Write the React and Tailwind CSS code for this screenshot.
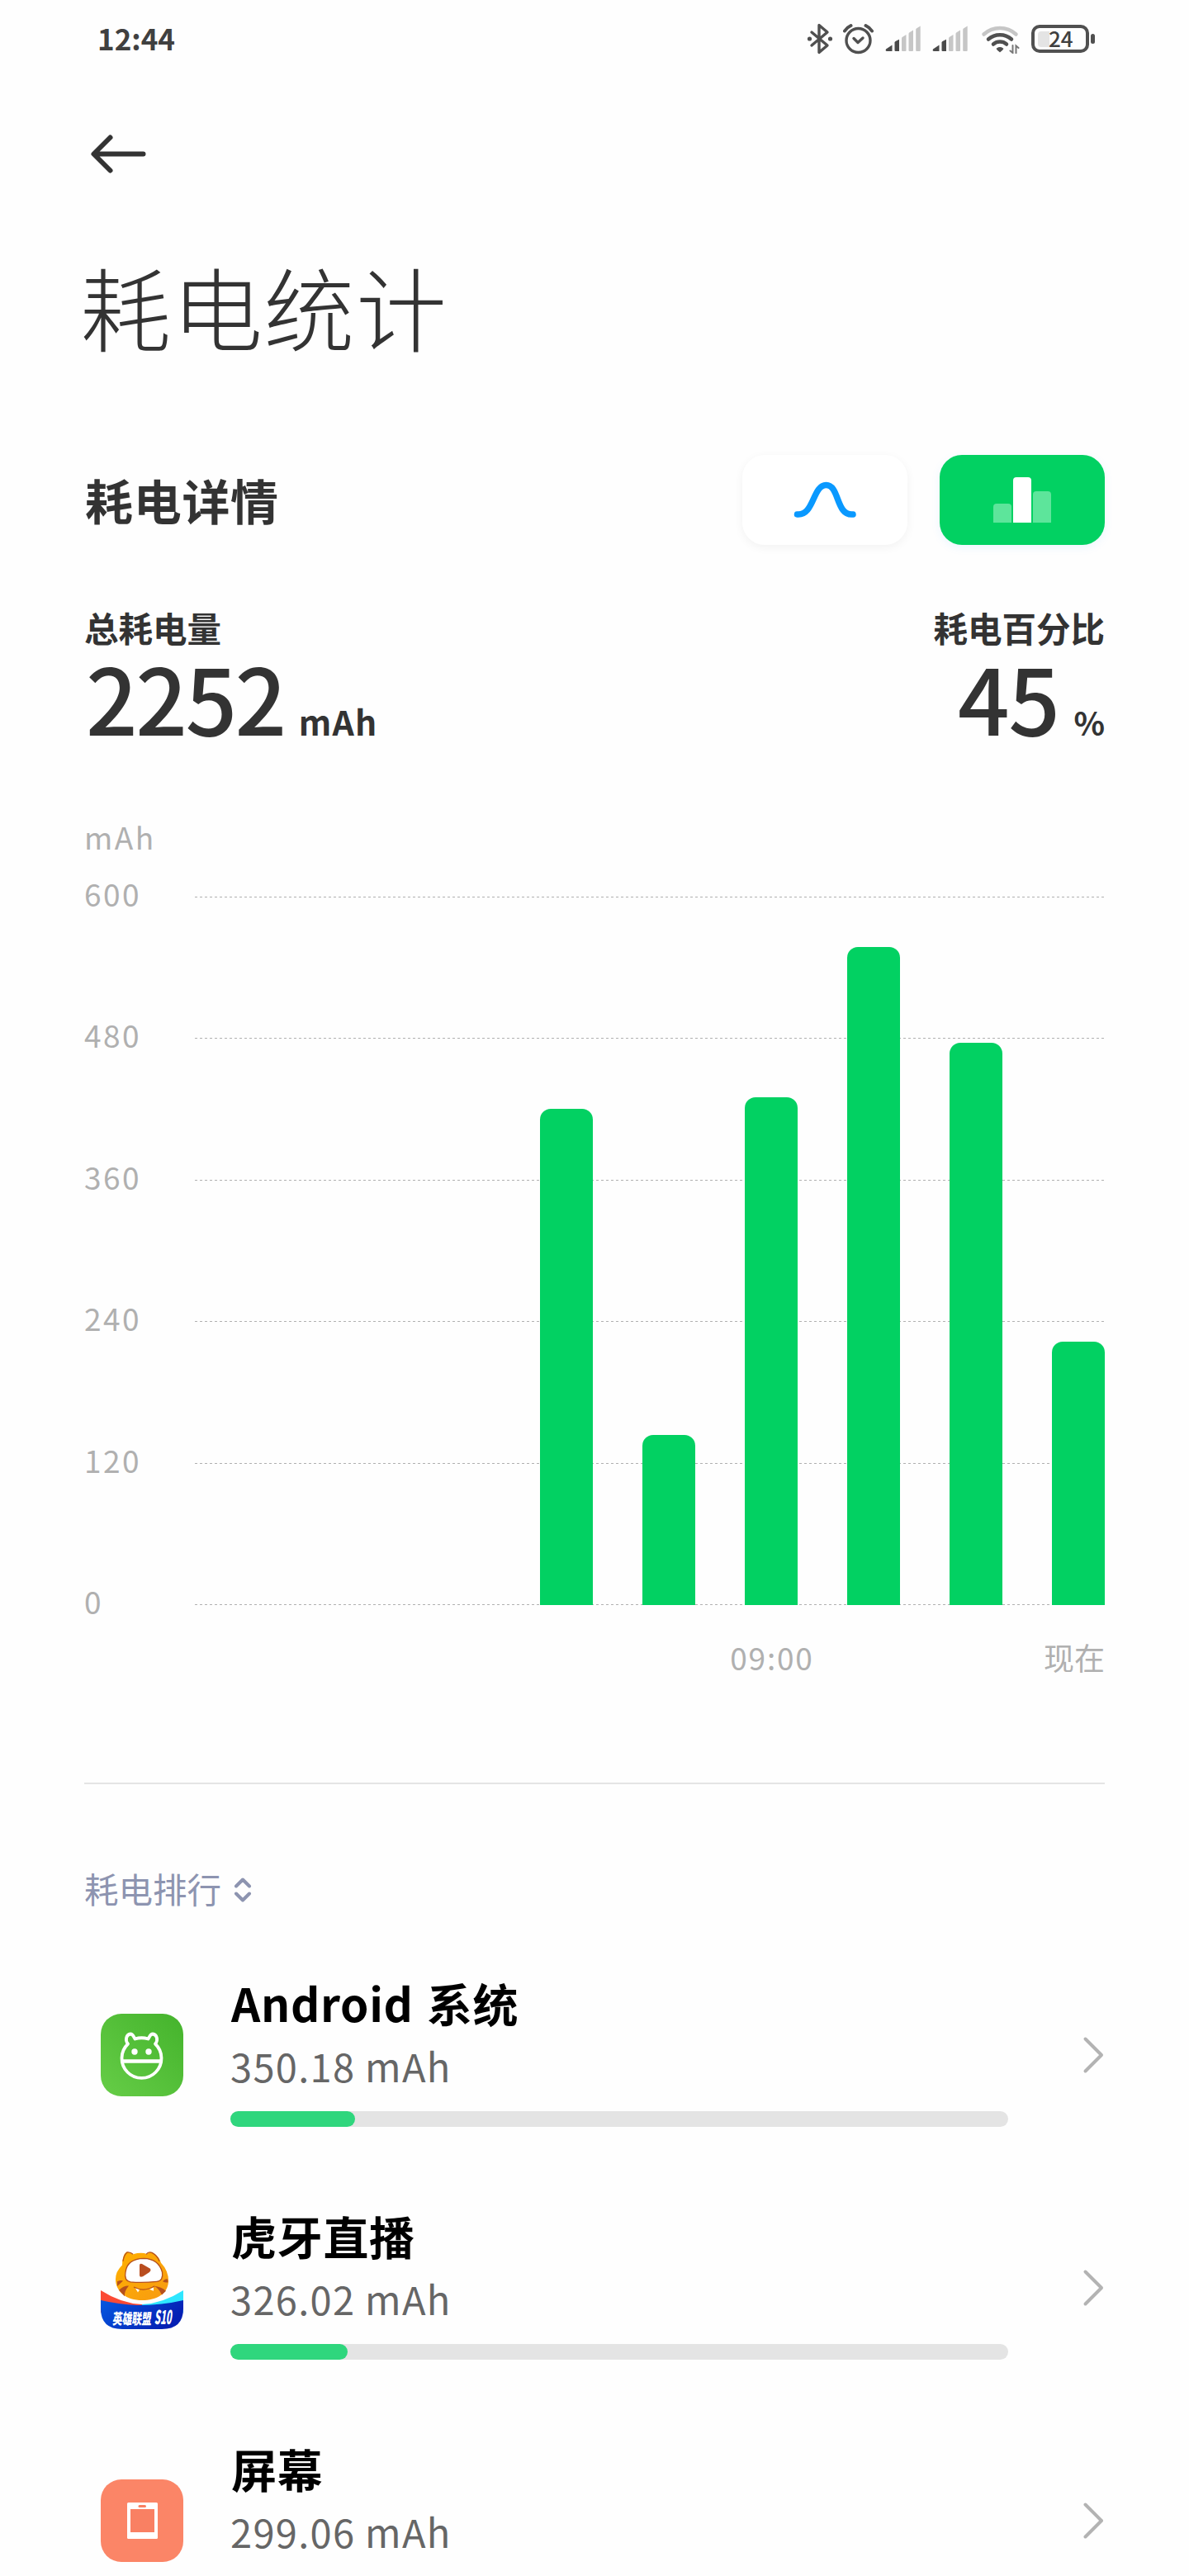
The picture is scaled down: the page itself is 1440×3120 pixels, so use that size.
import React from "react";

const ticks = [600, 480, 360, 240, 120, 0];

// bar heights in px, the plot area is 858px tall
const bars = [
  { height: 601, label: "" },
  { height: 206, label: "" },
  { height: 615, label: "09:00" },
  { height: 797, label: "" },
  { height: 681, label: "" },
  { height: 319, label: "现在" },
];

const SignalIcon = () => (
  <svg width="44" height="32" viewBox="0 0 44 32" fill="#c6c6c6">
    <path d="M1 28.5 L8.5 23.5 V31 H2 Q0 31 1 28.5Z" fill="#4a4a4a" />
    <path d="M11.500 20.500 Q11.500 19.500 12.500 19 L17 16.800 V31 H12.500 Q11.500 31 11.500 30Z" fill="#4a4a4a" />
    <path d="M20 15.500 Q20 14.500 21 13.800 L25.500 11 V30 Q25.500 31 24.500 31 H21 Q20 31 20 30Z" />
    <path d="M28.500 10 Q28.500 9 29.500 8.300 L34 5.500 V30 Q34 31 33 31 H29.500 Q28.500 31 28.500 30Z" />
    <path d="M37.200 5 Q37.200 4 38.200 3.200 L42.700 0.500 V30 Q42.700 31 41.700 31 H38.200 Q37.200 31 37.200 30Z" />
  </svg>
);

const StatusBar = () => (
  <div className="flex h-[94px] items-center justify-between pl-[118px] pr-[114px]">
    <span className="pb-1 text-[35px] leading-none font-bold text-[#404040]">12:44</span>
    <div className="flex items-center">
      {/* Bluetooth */}
      <svg className="mr-[12px]" width="32" height="38" viewBox="0 0 32 38" fill="none" stroke="#505050" strokeWidth="3.400" strokeLinejoin="round" strokeLinecap="round">
        <path d="M6 11 L25 27 L15 35.500 V2.500 L25 11 L6 27" />
        <circle cx="3.500" cy="19" r="1.600" fill="#505050" strokeWidth="2" />
        <circle cx="28.500" cy="19" r="1.600" fill="#505050" strokeWidth="2" />
      </svg>
      {/* Alarm */}
      <svg className="mr-[14px]" width="37" height="38" viewBox="0 0 37 38" fill="none" stroke="#505050" strokeWidth="3.400" strokeLinecap="round" strokeLinejoin="round">
        <circle cx="18.500" cy="21" r="14.500" />
        <path d="M13 18.500 L18 23.500 L24 18" />
        <path d="M2 9.500 Q5 5 9.500 3" strokeWidth="4" />
        <path d="M35 9.500 Q32 5 27.500 3" strokeWidth="4" />
      </svg>
      <span className="mr-[13px]">
        <SignalIcon />
      </span>
      <span className="mr-[15px]">
        <SignalIcon />
      </span>
      {/* Wifi */}
      <svg className="mr-[14px]" width="47" height="36" viewBox="0 0 47 36" fill="none" strokeWidth="4.500" strokeLinecap="round">
        <path d="M3.500 12.500 A29 29 0 0 1 42.500 12.500" stroke="#c6c6c6" />
        <path d="M9 18.500 A21 21 0 0 1 37 18.500" stroke="#505050" />
        <path d="M15 24.500 A12.500 12.500 0 0 1 31 24.500" stroke="#505050" />
        <path d="M19.500 30 Q23 27.500 26.500 30 Q26 31.500 23 33.500 Q20 31.500 19.500 30Z" fill="#505050" stroke="#505050" strokeWidth="1.500" />
        <path d="M38.500 26 V35 L35.500 32.500" stroke="#777" strokeWidth="2" />
        <path d="M42.500 35.500 V26.500 L45.500 29" stroke="#777" strokeWidth="2" />
      </svg>
      {/* Battery */}
      <div className="flex h-[34px] w-[70px] items-center rounded-[10px] border-4 border-[#505050] p-[4px]">
        <div className="h-[19px] w-[14px] rounded-l-[4px] bg-[#e4e4e4]"></div>
        <span className="-ml-px pb-[3px] text-[26px] leading-none font-medium text-[#404040]">24</span>
      </div>
      <div className="ml-[2px] h-[12px] w-[5px] rounded-full bg-[#505050]"></div>
    </div>
  </div>
);

const Summary = () => (
  <div className="flex justify-between">
    <div className="flex flex-col">
      <span className="h-[50px] text-[41.500px] leading-[50px] font-bold">总耗电量</span>
      <span className="mt-[2px] flex h-[112px] items-baseline pl-[2px] leading-[112px] font-medium">
        <span className="text-[110px] tracking-[-2.500px]">2252</span>
        <span className="ml-[17px] text-[41px] font-bold tracking-[1.200px]">mAh</span>
      </span>
    </div>
    <div className="flex flex-col items-end">
      <span className="h-[50px] text-[41.500px] leading-[50px] font-bold">耗电百分比</span>
      <span className="mt-[2px] flex h-[112px] items-baseline leading-[112px] font-medium">
        <span className="text-[110px] tracking-[-1.500px]">45</span>
        <span className="ml-[18px] text-[39px] font-bold">%</span>
      </span>
    </div>
  </div>
);

const Chart = () => (
  <div className="mt-[91px] text-[37px] text-[#b0b0b0]">
    <div className="h-[46px] leading-[46px] tracking-[2.500px]">mAh</div>

    <div className="mt-[50px] grid h-[858px]">
      {/* Grid lines */}
      <div className="col-start-1 row-start-1 flex flex-col justify-between">
        {ticks.map((tick) => (
          <div key={tick} className="flex h-px items-center">
            <span className="w-[134px] pb-[8px] leading-none tracking-[2.500px]">{tick}</span>
            <div className="h-px flex-1 bg-[repeating-linear-gradient(90deg,#b0b0b0_0_3px,transparent_3px_6px)]"></div>
          </div>
        ))}
      </div>
      {/* Bars */}
      <div className="z-10 col-start-1 row-start-1 flex items-end justify-end gap-[60px]">
        {bars.map((bar, i) => (
          <div key={i} className="w-[64px] rounded-t-[13px] bg-[#02d162]" style={{ height: bar.height }}></div>
        ))}
      </div>
    </div>

    <div className="mt-[38px] flex h-[50px] justify-end gap-[60px] leading-[50px]">
      {bars.map((bar, i) => (
        <div key={i} className="flex w-[64px] justify-center whitespace-nowrap tracking-[1.800px] last:justify-end last:tracking-normal">
          <span className="pl-[2px] last:pl-[2px]">{bar.label}</span>
        </div>
      ))}
    </div>
  </div>
);

const AndroidIcon = () => (
  <svg width="100" height="100" viewBox="0 0 100 100">
    <defs>
      <linearGradient id="android" x1="0" y1="1" x2="1" y2="0">
        <stop offset="0" stopColor="#66cd47" />
        <stop offset="1" stopColor="#44b32c" />
      </linearGradient>
    </defs>
    <rect width="100" height="100" rx="25" fill="url(#android)" />
    <g fill="none" stroke="#fff" strokeWidth="3.800" strokeLinejoin="round">
      <path d="M33 36.500 C29 32 31 25 36 24.500 C39 24.500 40 28 41.500 30.500 Q49.500 28 57.500 30.500 C59 28 60 24.500 63 24.500 C68 25 70 32 66 36.500 A24 24 0 1 1 33 36.500Z" />
      <path d="M26 57.500 H73" strokeWidth="4.500" />
    </g>
    <circle cx="41" cy="46" r="3.700" fill="#fff" />
    <circle cx="58" cy="46" r="3.700" fill="#fff" />
  </svg>
);

const HuyaIcon = () => (
  <svg className="overflow-visible" width="100" height="100" viewBox="0 0 100 100">
    <defs>
      <linearGradient id="banner" x1="0" y1="0" x2="1" y2="0.400">
        <stop offset="0" stopColor="#0658e0" />
        <stop offset="1" stopColor="#0520b4" />
      </linearGradient>
      <linearGradient id="tiger" x1="0" y1="0" x2="1" y2="1">
        <stop offset="0" stopColor="#ffb000" />
        <stop offset="1" stopColor="#f79b12" />
      </linearGradient>
    </defs>
    {/* ribbon behind the head */}
    <path d="M0 53 Q25 69 50 70 L50 80 L0 80Z" fill="#fb4a35" />
    <path d="M100 53 Q75 69 50 70 L50 80 L100 80Z" fill="#2ee6ff" />
    {/* tiger head */}
    <g transform="translate(0 5.500) scale(1 0.945)">
      <path d="M26 18 Q26 5 31 1 Q35 1 39 4 Q50 1 56 4 Q59 0 63 2 Q71 7 73 15 Q82 25 82 38 C82 54 68 63 50 63 C31 63 18 52 18 36 Q18 26 26 18Z" fill="url(#tiger)" />
      <g fill="none" stroke="#b5501c" strokeWidth="1.300">
        <path d="M27 13 Q28 5 32 1.500 Q36 1 39 4" />
        <path d="M55 4 Q58 0 62 2 Q69 6 71 13" />
        <path d="M30 27 Q32 10 52 9.500 Q70 10 74.500 27 Q76 38 68 39 Q50 41 36 39.500 Q28 38 30 27Z" fill="#fff" />
        <path d="M40 46 Q52 53 65 45" />
      </g>
      <path d="M47 18 Q47 15.500 50 16.500 L59 22 Q62 24 59 27 L51 32.500 Q47 34 47 31Z" fill="#b94e20" />
      <path d="M42 47.500 L47 49.500 L45 53Z M59 49 L64 46.500 L64 51Z" fill="#fff" />
      <g fill="#b5501c">
        <path d="M20 39 Q24 37 27 38 Q23 42 20 45Z" />
        <path d="M22 50 Q28 44 34 44.500 Q28 52 29 58Z" />
        <path d="M81 36 Q78 35 75 39 Q79 41 81.500 40Z" />
        <path d="M64 44.500 Q74 46 79 51 L74 56 Q70 47 64 44.500Z" />
      </g>
    </g>
    <path d="M0 65 Q22 70 44 71 Q75 71 100 65 V75 Q100 100 74 100 H26 Q0 100 0 75Z" fill="url(#banner)" />
    <text x="14" y="94" textLength="47" lengthAdjust="spacingAndGlyphs" transform="skewX(-6) translate(10 0)" fontSize="18" fontWeight="900" fill="#fff">英雄联盟</text>
    <text x="65" y="94.500" textLength="21" lengthAdjust="spacingAndGlyphs" transform="skewX(-8) translate(13 0)" fontSize="23" fontWeight="900" fill="#fff">S10</text>
  </svg>
);

const ScreenIcon = () => (
  <svg width="100" height="100" viewBox="0 0 100 100">
    <rect width="100" height="100" rx="25" fill="#fb8567" />
    <rect x="32" y="28" width="37" height="44" rx="1.500" fill="#fff" />
    <rect x="36" y="36" width="29" height="28" fill="#f98063" />
    <rect x="45.500" y="31" width="9.500" height="3" rx="1.500" fill="#f98063" />
  </svg>
);

const apps = [
  { name: "Android 系统", usage: "350.18 mAh", percent: 16, icon: <AndroidIcon /> },
  { name: "虎牙直播", usage: "326.02 mAh", percent: 15.1, icon: <HuyaIcon /> },
  { name: "屏幕", usage: "299.06 mAh", percent: 13.8, icon: <ScreenIcon /> },
];

const AppRow = ({ app }) => (
  <div className="mb-[64px] flex h-[218px] items-center pl-[20px]">
    {app.icon}
    <div className="ml-[57px] h-full w-[942px]">
      <div className="h-[88px] pl-px text-[55px] leading-[90px] font-bold tracking-[0.700px] text-black [word-spacing:3px]">{app.name}</div>
      <div className="h-[67px] text-[47px] leading-[68px] tracking-[1.300px] text-[#666]">{app.usage}</div>
      <div className="mt-[22px] h-[19px] rounded-full bg-[#e4e4e4]">
        <div className="h-full rounded-full bg-[#2fd67d]" style={{ width: `${app.percent}%` }}></div>
      </div>
    </div>
    <svg className="ml-auto" width="27" height="46" viewBox="0 0 27 46" fill="none" stroke="#b3b3b3" strokeWidth="4" strokeLinecap="round" strokeLinejoin="round">
      <path d="M3.500 3.500 L23 23 L3.500 42.500" />
    </svg>
  </div>
);

const App = () => {
  return (
    <div
      lang="zh-CN"
      className="h-[3120px] w-[1440px] overflow-hidden bg-[#fefefe] font-['Noto_Sans_CJK_SC',sans-serif] text-[#333]"
    >
      <StatusBar />

      <div className="px-[102px]">
        <svg className="mt-[68px] ml-[7px]" width="68" height="49" viewBox="0 0 68 49" fill="none" stroke="#333" strokeWidth="6" strokeLinecap="round" strokeLinejoin="round">
          <path d="M24.500 4.500 L4.500 24.500 L24.500 44.500 M5 24.500 H64.500" />
        </svg>

        <h1 className="mt-[79px] -ml-[5px] h-[160px] text-[110px] leading-[160px] font-light tracking-[1.300px]">耗电统计</h1>

        {/* Details header */}
        <div className="mt-[101px] flex h-[109px] items-center">
          <h2 className="mr-auto pb-[2px] pl-px text-[58px] leading-none font-bold tracking-[0.700px]">耗电详情</h2>
          <button className="flex h-[109px] w-[200px] items-center justify-center rounded-[27px] bg-white shadow-[0_3px_12px_rgba(0,0,0,0.05)]">
            <svg width="80" height="50" viewBox="0 0 80 50" fill="none" stroke="#0a99ff" strokeWidth="7.500" strokeLinecap="round">
              <path d="M6.500 42 C27 44 25 6.500 41.500 6.500 C58 6.500 53 44 74 42" />
            </svg>
          </button>
          <button className="ml-[39px] flex h-[109px] w-[200px] items-center justify-center rounded-[27px] bg-[#02d162] shadow-[0_3px_12px_rgba(0,150,255,0.08)]">
            <span className="flex h-[55px] items-end gap-[2px]">
              <span className="h-[23px] w-[22px] rounded-t-[4px] bg-[#5de59b]"></span>
              <span className="h-[55px] w-[22px] rounded-t-[4px] bg-white"></span>
              <span className="h-[38px] w-[22px] rounded-t-[4px] bg-[#5de59b]"></span>
            </span>
          </button>
        </div>

        <div className="mt-[75px]">
          <Summary />
        </div>

        <Chart />

        <hr className="mt-[127px] h-[2px] border-0 bg-[#e5e5e5]" />

        <div className="mt-[101px] flex h-[50px] items-center text-[#8d94b0]">
          <span className="text-[41.500px] leading-[50px]">耗电排行</span>
          <svg className="mt-[3px] ml-[14px]" width="24" height="32" viewBox="0 0 24 32" fill="none" stroke="currentColor" strokeWidth="4" strokeLinecap="round" strokeLinejoin="round">
            <path d="M4 11.500 L12 3.500 L20 11.500 M4 20.500 L12 28.500 L20 20.500" />
          </svg>
        </div>

        <div className="mt-[68px]">
          {apps.map((app) => (
            <AppRow key={app.name} app={app} />
          ))}
        </div>
      </div>
    </div>
  );
};

export default App;
